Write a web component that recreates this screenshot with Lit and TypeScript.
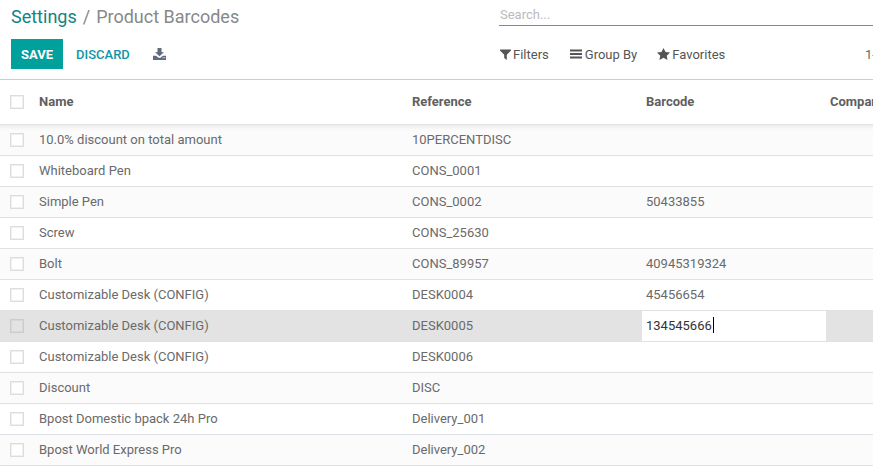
import { LitElement, html, css } from "lit";
import { customElement } from "lit/decorators.js";

const ROWS: [string, string, string][] = [
  ["10.0% discount on total amount", "10PERCENTDISC", ""],
  ["Whiteboard Pen", "CONS_0001", ""],
  ["Simple Pen", "CONS_0002", "50433855"],
  ["Screw", "CONS_25630", ""],
  ["Bolt", "CONS_89957", "40945319324"],
  ["Customizable Desk (CONFIG)", "DESK0004", "45456654"],
  ["Customizable Desk (CONFIG)", "DESK0005", "134545666"],
  ["Customizable Desk (CONFIG)", "DESK0006", ""],
  ["Discount", "DISC", ""],
  ["Bpost Domestic bpack 24h Pro", "Delivery_001", ""],
  ["Bpost World Express Pro", "Delivery_002", ""],
];

@customElement("app-root")
export class AppRoot extends LitElement {
  static styles = css`
    :host {
      display: block;
      width: 873px;
      height: 473px;
      overflow: hidden;
      background: #fff;
      font-family: Roboto, sans-serif;
      font-size: 13px;
      color: #666;
    }
    .panel {
      height: 80px;
      box-sizing: border-box;
      border-bottom: 1px solid #ccc;
      display: grid;
      grid-template-columns: 499px 374px;
      grid-template-rows: 39px 30px;
    }
    .crumbs {
      padding: 6px 0 0 11px;
      font-size: 18px;
      line-height: 22px;
      color: #888;
      white-space: nowrap;
    }
    .crumbs .link { color: #128484; }
    .crumbs .sep { padding: 0 6px; }
    .search {
      height: 26px; border-bottom: 1px solid #888; box-sizing: border-box; width: 374px;
      line-height: 30px; color: #bbb; font-size: 13px; padding-left: 1px;
    }
    .buttons { display: flex; align-items: center; padding-left: 11px; height: 30px; }
    .save {
      width: 52px; height: 30px; display: flex; align-items: center; justify-content: center;
      background: #00a09d; color: #fff; font-weight: 700; font-size: 13px;
    }
    .discard { margin-left: 13px; color: #1295a5; font-weight: 500; font-size: 13px; }
    .dl { margin-left: 23px; display: flex; }
    .tools { display: flex; align-items: center; height: 30px; font-size: 13px; color: #555; font-weight: 400; }
    .tool { display: flex; align-items: center; white-space: nowrap; }
    .tool svg { display: block; }
    .filters { margin-left: 1px; }
    .filters svg { margin-right: 2px; }
    .group { margin-left: 21px; }
    .group svg { margin-right: 3px; }
    .fav { margin-left: 20px; }
    .fav svg { margin-right: 2px; }
    .pager { margin-left: auto; width: 8px; overflow: hidden; color: #666; white-space: nowrap; }
    .row {
      display: grid;
      grid-template-columns: 39px 373px 234px 184px 100px;
      width: 930px;
      align-items: center;
      box-sizing: border-box;
      height: 31px;
      border-bottom: 1px solid #dee2e6;
      background: #fff;
    }
    .row.alt { background: #fbfbfc; }
    .row.head {
      height: 45px;
      font-weight: 700;
      color: #5f5f5f;
      border-bottom: 1px solid #e2e2e2;
      padding-bottom: 1px;
    }
    .row.first { box-shadow: inset 0 6px 6px -6px rgba(0,0,0,0.12); }
    .row.active { background: #e3e3e3; }
    .check {
      width: 12px; height: 12px; border: 1px solid #ddd; background: #fff; margin-left: 10px;
      box-shadow: inset 0 0 0 1px #f0f0f0;
    }
    .active .check { background: transparent; border-color: #ccc; box-shadow: inset 0 0 0 1px #d8d8d8; }
    .cell { white-space: nowrap; color: #6a6a6a; position: relative; top: -1px; }
    .edit {
      align-self: stretch; background: #fff; margin-left: -4px; padding-left: 4px; width: 184px;
      display: flex; align-items: center; color: #333; height: 30px; padding-bottom: 2px; box-sizing: border-box;
    }
    .caret { width: 1px; height: 16px; background: #000; margin-left: 1px; }
  `;

  render() {
    return html`
      <div class="panel">
        <div class="crumbs"><span class="link">Settings</span><span class="sep">/</span><span>Product Barcodes</span></div>
        <div><div class="search">Search...</div></div>
        <div class="buttons">
          <div class="save">SAVE</div>
          <div class="discard">DISCARD</div>
          <div class="dl">
            <svg width="13" height="12" viewBox="0 0 13 12.500" preserveAspectRatio="none" fill="#5f6a7d">
              <path d="M4.500 0h4v4.500h2.500L6.500 8.500 2 4.500h2.500z"/>
              <path d="M0 8h3.200l1.600 1.600c.9.800 2.500.800 3.400 0L9.800 8H13v4.500H0zM9.500 10.200a.6.6 0 1 0 1.200 0 .6.6 0 0 0-1.200 0zm1.700 0a.6.6 0 1 0 1.200 0 .6.6 0 0 0-1.200 0z"/>
            </svg>
          </div>
        </div>
        <div class="tools">
          <div class="tool filters">
            <svg width="11" height="11" viewBox="0 0 11 11" fill="#555"><path d="M0 .5h11v1L6.800 5.800V11L4.200 9V5.800L0 1.500z"/></svg>
            Filters
          </div>
          <div class="tool group">
            <svg width="12" height="10" viewBox="0 0 12 10" fill="#555"><rect y="0.5" width="12" height="2"/><rect y="4" width="12" height="2"/><rect y="7.500" width="12" height="2"/></svg>
            Group By
          </div>
          <div class="tool fav">
            <svg width="13" height="12" viewBox="0 0 13 12" fill="#555"><path d="M6.500 0l2 4 4.500.6-3.250 3.100.8 4.300-4.050-2.150L2.450 12l.8-4.300L0 4.600 4.500 4z"/></svg>
            Favorites
          </div>
          <div class="pager">1-80</div>
        </div>
      </div>
      <div class="row head">
        <div class="check"></div>
        <div>Name</div><div>Reference</div><div>Barcode</div><div>Company</div>
      </div>
      ${ROWS.map((r, i) => {
        const active = i === 6;
        const cls = `row ${i === 0 ? "first" : ""} ${i % 2 === 0 ? "alt" : ""} ${active ? "active" : ""}`;
        return html`<div class=${cls}>
          <div class="check"></div>
          <div class="cell">${r[0]}</div>
          <div class="cell">${r[1]}</div>
          ${active
            ? html`<div class="edit">${r[2]}<span class="caret"></span></div>`
            : html`<div class="cell">${r[2]}</div>`}
          <div></div>
        </div>`;
      })}
    `;
  }
}
